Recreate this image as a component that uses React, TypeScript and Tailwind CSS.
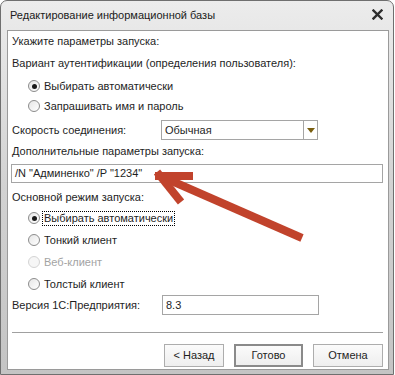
import React from "react";

const font = { fontFamily: '"Liberation Sans", Arial, sans-serif' };

function Radio({ checked, disabled, label, focused }: { checked?: boolean; disabled?: boolean; label: string; focused?: boolean }) {
  return (
    <div className="flex h-[20px] items-center pl-[20px]">
      <span
        className={
          "flex h-[12px] w-[12px] items-center justify-center rounded-full border " +
          (disabled ? "border-[#d4d4d4] bg-[#f6f6f6]" : "border-[#8c8c8c] bg-gradient-to-br from-[#e6e6e6] to-[#ffffff]")
        }
      >
        {checked && <span className="h-[5px] w-[5px] rounded-full bg-[#1a1a1a]" />}
      </span>
      <span
        className={
          "ml-[3px] px-[1px] leading-[13px] " +
          (focused ? "outline-1 outline-dotted outline-black " : "") +
          (disabled ? "text-[#a3a3a3]" : "text-[#1e1e1e]")
        }
      >
        {label}
      </span>
    </div>
  );
}

export default function App() {
  return (
    <div className="relative h-[375px] w-[395px] bg-white text-[11px]" style={font}>
      <div className="flex h-[375px] w-[394px] flex-col rounded-t-[7px] border border-[#6f6f6f] bg-gradient-to-b from-[#ececec] via-[#d2d2d2] to-[#c4c4c4] pb-[4px] pl-[6px] pr-[4px]">
        {/* title bar */}
        <div className="flex h-[29px] items-center justify-between pl-[3px] pr-[6px]">
          <span className="text-[11px] text-[#1b1b1b]">Редактирование информационной базы</span>
          <svg width="11" height="11" viewBox="0 0 11 11" className="mt-[-2px]">
            <path d="M1.5 1.5 L9.5 9.5 M9.5 1.5 L1.5 9.5" stroke="#2d2d2d" strokeWidth="2.4" strokeLinecap="square" />
          </svg>
        </div>
        {/* client */}
        <div className="flex flex-1 flex-col border border-[#9a9a9a] bg-white text-[#1e1e1e]">
          <div className="flex h-[20px] items-center pl-[4px]">Укажите параметры запуска:</div>
          <div className="mt-[2px] flex h-[20px] items-center pl-[4px]">Вариант аутентификации (определения пользователя):</div>
          <div className="mt-[3px]">
            <Radio checked label="Выбирать автоматически" />
            <Radio label="Запрашивать имя и пароль" />
          </div>
          <div className="mt-[4px] flex h-[20px] items-center pl-[4px]">
            <span className="w-[149px]">Скорость соединения:</span>
            <div className="flex h-[20px] w-[157px] items-stretch border border-[#a5a5a5]">
              <span className="flex flex-1 items-center pl-[3px]">Обычная</span>
              <span className="flex w-[14px] items-center justify-center border-l border-[#a5a5a5]">
                <svg width="8" height="5" viewBox="0 0 8 5">
                  <path d="M0 0 H8 L4 5 Z" fill="#7a5f10" />
                </svg>
              </span>
            </div>
          </div>
          <div className="mt-[1px] flex h-[20px] items-center pl-[4px]">Дополнительные параметры запуска:</div>
          <div className="ml-[3px] mt-[3px] flex h-[19px] w-[372px] items-center border border-[#a5a5a5] pl-[3px]">
            /N "Админенко" /P "1234"
          </div>
          <div className="mt-[4px] flex h-[20px] items-center pl-[4px]">Основной режим запуска:</div>
          <div className="mt-[1px] flex flex-col gap-[2px]">
            <Radio checked focused label="Выбирать автоматически" />
            <Radio label="Тонкий клиент" />
            <Radio disabled label="Веб-клиент" />
            <Radio label="Толстый клиент" />
          </div>
          <div className="mt-[1px] flex h-[20px] items-center pl-[4px]">
            <span className="w-[150px]">Версия 1С:Предприятия:</span>
            <div className="flex h-[20px] w-[157px] items-center border border-[#a5a5a5] pl-[3px]">8.3</div>
          </div>
          <div className="ml-[4px] mt-[17px] h-px w-[371px] bg-[#a0a0a0]" />
          <div className="mt-[11px] flex justify-end gap-[10px] pr-[5px]">
            <button className="h-[23px] w-[60px] border border-[#adadad] bg-gradient-to-b from-[#fbfbfb] to-[#eeeeee] text-[#1e1e1e]">&lt; Назад</button>
            <button className="h-[23px] w-[69px] border-2 border-[#8a8a8a] bg-gradient-to-b from-[#fbfbfb] to-[#eeeeee] text-[#1e1e1e]">Готово</button>
            <button className="h-[23px] w-[70px] border border-[#adadad] bg-gradient-to-b from-[#fbfbfb] to-[#eeeeee] text-[#1e1e1e]">Отмена</button>
          </div>
        </div>
      </div>
      {/* annotation arrow */}
      <svg className="pointer-events-none absolute left-0 top-0" width="395" height="375" viewBox="0 0 395 375">
        <g stroke="#c1432c" strokeWidth="8" strokeLinecap="butt" fill="none">
          <line x1="158" y1="175" x2="302" y2="238" />
          <line x1="155" y1="176" x2="193" y2="176" />
          <line x1="157" y1="172" x2="181" y2="202" />
        </g>
      </svg>
    </div>
  );
}
